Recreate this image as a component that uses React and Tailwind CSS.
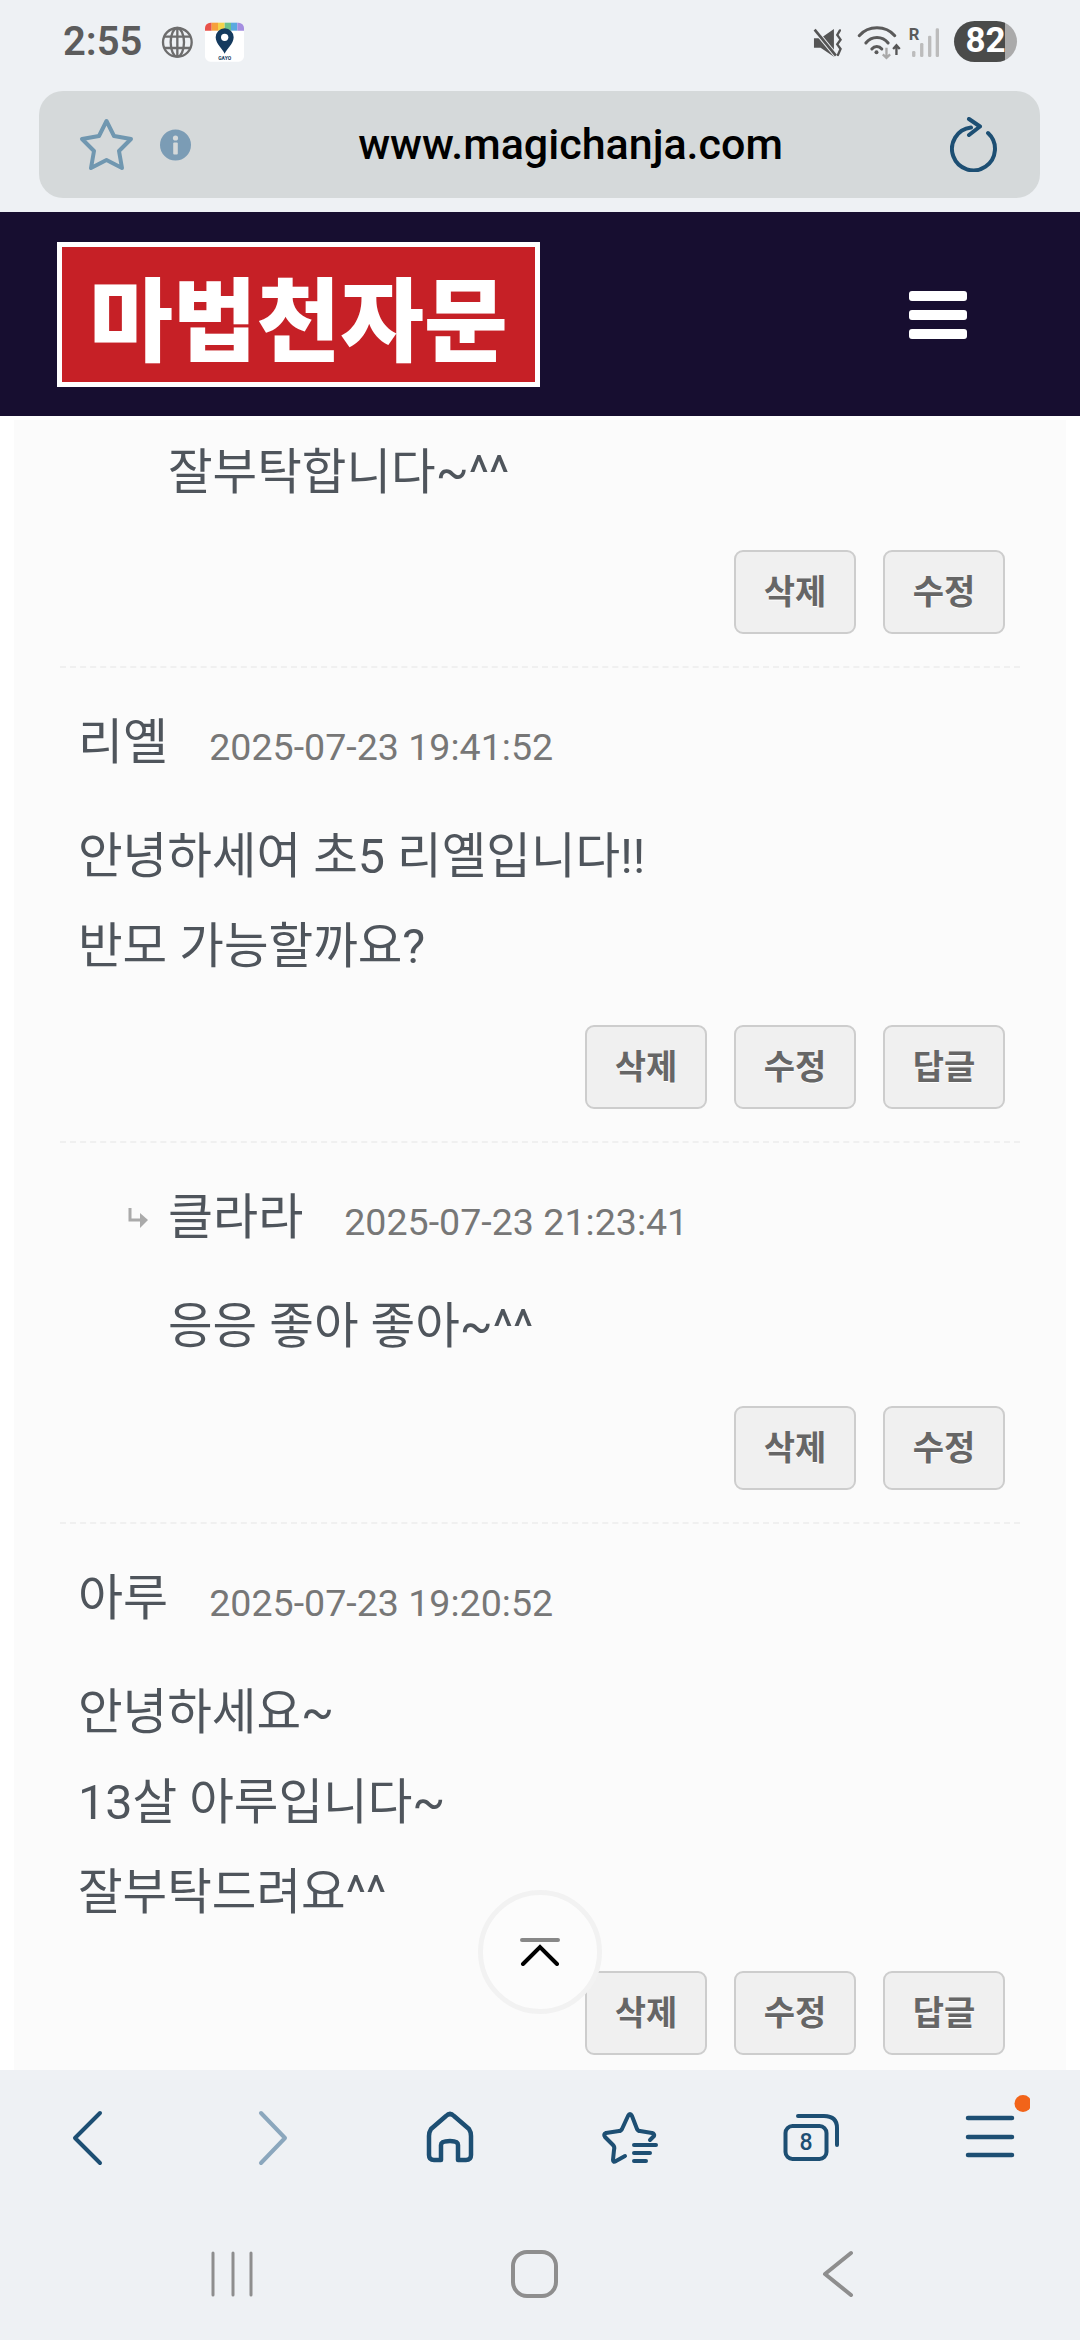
const comments = [
  {
    id: 1,
    reply: true,
    noHead: true,
    lines: ['잘부탁합니다~^^'],
    actions: ['삭제', '수정'],
  },
  {
    id: 2,
    name: '리옐',
    time: '2025-07-23 19:41:52',
    lines: ['안녕하세여 초5 리옐입니다!!', '반모 가능할까요?'],
    actions: ['삭제', '수정', '답글'],
  },
  {
    id: 3,
    reply: true,
    name: '클라라',
    time: '2025-07-23 21:23:41',
    lines: ['응응 좋아 좋아~^^'],
    actions: ['삭제', '수정'],
  },
  {
    id: 4,
    name: '아루',
    time: '2025-07-23 19:20:52',
    lines: ['안녕하세요~', '13살 아루입니다~', '잘부탁드려요^^'],
    actions: ['삭제', '수정', '답글'],
  },
];

const StatusLeft = () => (
  <svg width="90" height="60" viewBox="330 0 270 180" fill="none">
    <g stroke="#6d6d6d" strokeWidth="7">
      <circle cx="385" cy="82" r="43" />
      <ellipse cx="385" cy="82" rx="20" ry="43" />
      <path d="M345 65H425M345 99H425M385 39V125" />
    </g>
    <rect x="468" y="23" width="117" height="117" rx="16" fill="#fff" />
    <path d="M468 47V39a16 16 0 0 1 16-16h4v24z" fill="#e8524a" />
    <rect x="488" y="23" width="19" height="24" fill="#f6a03c" />
    <rect x="507" y="23" width="20" height="24" fill="#f3d34a" />
    <rect x="527" y="23" width="19" height="24" fill="#6cc28c" />
    <rect x="546" y="23" width="19" height="24" fill="#5aa9e0" />
    <path d="M565 23h4a16 16 0 0 1 16 16v8h-20z" fill="#a48ee0" />
    <path d="M527 116c-5-12-27-30-27-49a27 27 0 0 1 54 0c0 19-22 37-27 49z" fill="#143a5e" />
    <circle cx="527" cy="67" r="11" fill="#fff" />
    <text x="527" y="134" textAnchor="middle" fontSize="15" fontWeight="700" fill="#143a5e">GAYO</text>
  </svg>
);

const StatusIcons = () => (
  <svg width="143" height="60" viewBox="0 0 430 180" fill="none">
    <path d="M42 70H62L102 42V125L62 98H42Z" fill="#555" />
    <path d="M44 44L108 122" stroke="#eef1f4" strokeWidth="14" />
    <path d="M44 44L108 122" stroke="#555" strokeWidth="8" />
    <path d="M120 46l-8 14 10 14-10 14 10 14-8 18" stroke="#555" strokeWidth="7" strokeLinecap="round" />
    <g stroke="#5a5a5a" strokeWidth="9" strokeLinecap="round">
      <path d="M178 62C205 30 258 30 285 62" />
      <path d="M198 84C215 62 248 62 265 84" />
      <path d="M216 102C224 92 238 92 246 102" />
    </g>
    <circle cx="230" cy="112" r="6" fill="#5a5a5a" />
    <path d="M260 98V128M249 118L260 129L271 118" stroke="#a9a9a9" strokeWidth="7" />
    <path d="M290 120V92M280 102L290 91L300 102" stroke="#555" strokeWidth="7" />
    <text x="327" y="75" fontSize="50" fontWeight="700" fill="#5a5a5a">R</text>
    <g fill="#bcbcbc">
      <rect x="337" y="108" width="10" height="18" rx="4" />
      <rect x="361" y="84" width="10" height="42" rx="4" />
      <rect x="385" y="62" width="10" height="64" rx="4" />
      <rect x="408" y="40" width="10" height="86" rx="4" />
    </g>
  </svg>
);

const StarOutline = () => (
  <svg width="55" height="53" viewBox="0 0 55 53" fill="none" stroke="#7097b0" strokeWidth="4" strokeLinejoin="round">
    <path d="M27.5 3L35 18L52 21L40 33L43 50L27.5 42L12 50L15 33L3 21L20 18Z" />
  </svg>
);

const InfoDot = () => (
  <svg width="31" height="32" viewBox="0 0 31 32">
    <circle cx="15.5" cy="16" r="15.5" fill="#7b9cb5" />
    <circle cx="15.5" cy="9" r="2.6" fill="#d5d9da" />
    <rect x="13.2" y="13.5" width="4.6" height="12" rx="1" fill="#d5d9da" />
  </svg>
);

const Reload = () => (
  <svg width="47" height="55" viewBox="0 0 47 55" fill="none" stroke="#1d4f73" strokeWidth="4" strokeLinecap="round" strokeLinejoin="round">
    <path d="M38 16A21.5 21.5 0 1 1 21 10.5" />
    <path d="M19 2L30 9.5L19 18" />
  </svg>
);

const BarIcon = ({ children }) => (
  <div className="flex justify-center">
    <svg width="80" height="90" viewBox="0 0 80 90" fill="none" stroke="#1d4f73" strokeWidth="4.5" strokeLinecap="round" strokeLinejoin="round">
      {children}
    </svg>
  </div>
);

const NavIcon = ({ children }) => (
  <div className="flex justify-center">
    <svg width="80" height="60" viewBox="0 0 80 60" fill="none" stroke="#8e8e8e" strokeLinecap="round" strokeLinejoin="round">
      {children}
    </svg>
  </div>
);

const ActionButton = ({ label }) => (
  <button className="w-[122px] h-[84px] rounded-[9px] border-2 border-[#cdcdcd] bg-[#f0f0f0] text-[34px] font-bold text-[#666] [text-shadow:0_1px_0_#fff]">
    {label}
  </button>
);

const ReplyArrow = () => (
  <svg width="20" height="21" viewBox="0 0 20 21" className="mr-[20px] shrink-0" fill="none">
    <path d="M2 0V12H13" stroke="#aaa" strokeWidth="3" />
    <path d="M12 5L20 12L12 20Z" fill="#aaa" />
  </svg>
);

const Comment = ({ comment, last }) => {
  const { reply, noHead, name, time, lines, actions } = comment;
  return (
    <div className={`${last ? '' : 'border-b-2'} border-dashed border-[#f0f0f0] ${noHead ? 'pt-[8px]' : 'pt-[45px]'} pb-[32px] pr-[15px] ${reply ? 'pl-[68px]' : 'pl-[18px]'}`}>
      {!noHead && (
        <div className="flex items-center h-[60px]">
          {reply && <ReplyArrow />}
          <span className="text-[49px] text-[#4f555c] mr-[41px]">{name}</span>
          <span className="text-[37.6px] text-[#777] mt-[8px]">{time}</span>
        </div>
      )}
      <div className={`${reply ? 'pl-[40px]' : ''} ${noHead ? '' : reply ? 'mt-[34px]' : 'mt-[39px]'}`}>
        {lines.map((line) => (
          <p key={line} className="text-[48.5px] leading-[90px] text-[#4f555c]">{line}</p>
        ))}
      </div>
      <div className={`flex justify-end gap-[27px] ${noHead ? 'mt-[32px]' : lines.length > 1 ? 'mt-[33px]' : 'mt-[34px]'}`}>
        {actions.map((label) => (
          <ActionButton key={label} label={label} />
        ))}
      </div>
    </div>
  );
};

const App = () => {
  return (
    <div className="w-[1080px] h-[2340px] flex flex-col overflow-hidden bg-white font-[Roboto,'Noto_Sans_CJK_KR',sans-serif]">
      {/* browser chrome */}
      <div className="h-[212px] shrink-0 bg-[#eef1f4]">
        <div className="h-[91px] flex justify-between items-start pt-[15px] pl-[63px] pr-[63px]">
          <div className="flex items-start">
            <span className="text-[40px] leading-[54px] font-semibold text-[#5c5c5c] mr-[17px]">2:55</span>
            <StatusLeft />
          </div>
          <div className="flex items-start gap-[11px]">
            <StatusIcons />
            <div className="w-[63px] h-[41px] mt-[6px] rounded-full flex items-center justify-center text-[35px] font-bold text-white bg-[linear-gradient(90deg,#4a4b4a_81%,#aaa_81%)]">
              82
            </div>
          </div>
        </div>
        <div className="mx-[39px] w-[1001px] h-[107px] rounded-[24px] bg-[#d5d9da] flex items-center pl-[40px] pr-[43px]">
          <StarOutline />
          <div className="ml-[26px]">
            <InfoDot />
          </div>
          <div className="flex-1 text-center text-[43px] font-medium text-black">www.magichanja.com</div>
          <Reload />
        </div>
      </div>

      {/* site header */}
      <div className="h-[204px] shrink-0 bg-[#170e30] flex items-center justify-between pl-[57px] pr-[113px]">
        <div className="w-[483px] h-[145px] border-[5px] border-white bg-[#c62026] flex items-center justify-center">
          <span className="text-[91px] leading-none font-black text-white font-['Noto_Sans_CJK_KR',sans-serif]">마법천자문</span>
        </div>
        <div className="flex flex-col gap-[9px] mt-[1px]">
          <div className="w-[58px] h-[10px] rounded-[3px] bg-white" />
          <div className="w-[58px] h-[10px] rounded-[3px] bg-white" />
          <div className="w-[58px] h-[10px] rounded-[3px] bg-white" />
        </div>
      </div>

      {/* comments */}
      <div className="relative flex-1 min-h-0 overflow-hidden pt-[4px]">
        <div className="mx-[14px] w-[1052px] h-full bg-[#fbfbfb] px-[46px]">
          {comments.map((c, i) => (
            <Comment key={c.id} comment={c} last={i === comments.length - 1} />
          ))}
        </div>
        <button className="absolute left-[478px] top-[1474px] w-[124px] h-[124px] rounded-full border-[5px] border-[#f2f2f2] bg-[#fcfcfc] flex items-center justify-center">
          <svg width="40" height="28" viewBox="0 0 40 28" fill="none" strokeLinecap="round" strokeWidth="4">
            <path d="M2 2H38" stroke="#888" />
            <path d="M3 26L20 9L37 26" stroke="#000" />
          </svg>
        </button>
      </div>

      {/* browser toolbar + system nav */}
      <div className="h-[270px] shrink-0 bg-[#eef1f4] pt-[20px]">
        <div className="grid grid-cols-6">
          <BarIcon>
            <path d="M50 23L25 48L50 73" strokeWidth="4" />
          </BarIcon>
          <BarIcon>
            <path d="M31 23L55 48L31 73" stroke="#8ba7bd" strokeWidth="4" />
          </BarIcon>
          <BarIcon>
            <path d="M31 70H24Q19 70 19 65V46Q19 42 21 39L36 26Q40 22 44 26L59 39Q61 42 61 46V65Q61 70 56 70H48V55Q48 51 40 51Q31 51 31 55Z" />
          </BarIcon>
          <BarIcon>
            <path d="M60 50L64 46Q65 44 62 43L50 41Q48 41 47 39L42 26Q40 22 38 26L32 39Q31 41 29 41L16 43Q13 44 15 47L23 55Q25 57 24 60L23 70Q23 73 26 71L35 66" strokeWidth="4" />
            <path d="M44 55H66M44 63H60M44 71H56" strokeWidth="4" />
          </BarIcon>
          <BarIcon>
            <rect x="15.5" y="36" width="41" height="33" rx="7" strokeWidth="4" />
            <path d="M28 26H54Q67 26 67 38V55" strokeWidth="4" />
            <text x="36" y="60" textAnchor="middle" fontSize="23" fontWeight="500" fill="#1d4f73" stroke="none">8</text>
          </BarIcon>
          <BarIcon>
            <path d="M18 28H62M18 47H62M18 65H62" />
            <circle cx="73" cy="13.5" r="8.5" fill="#f26419" stroke="none" />
          </BarIcon>
        </div>
        <div className="grid grid-cols-3 pl-[82px] pr-[91px] mt-[64px]">
          <NavIcon>
            <path d="M20 9V51M40 9V51M58 9V51" strokeWidth="3" />
          </NavIcon>
          <NavIcon>
            <rect x="18" y="8" width="43" height="44" rx="14" strokeWidth="4" />
          </NavIcon>
          <NavIcon>
            <path d="M53 9L27 30L53 51" strokeWidth="4" />
          </NavIcon>
        </div>
      </div>
    </div>
  );
};

export default App;
